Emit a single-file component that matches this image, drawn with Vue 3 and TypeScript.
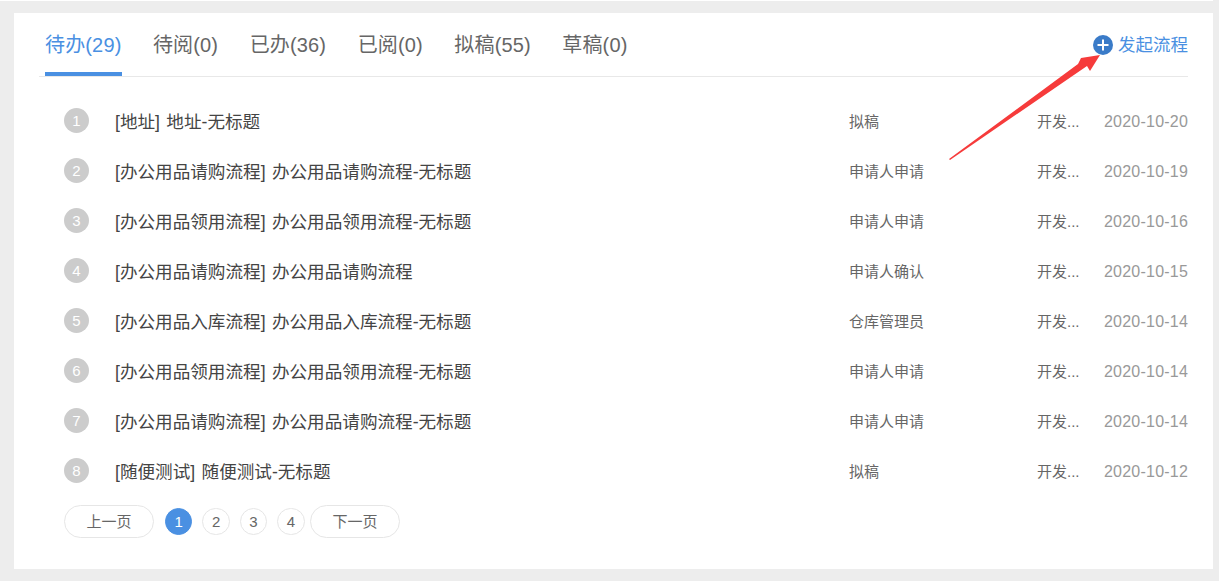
<script setup lang="ts">
const tabs = ['待办(29)', '待阅(0)', '已办(36)', '已阅(0)', '拟稿(55)', '草稿(0)']
const rows = [
  { title: '[地址] 地址-无标题', node: '拟稿', date: '2020-10-20' },
  { title: '[办公用品请购流程] 办公用品请购流程-无标题', node: '申请人申请', date: '2020-10-19' },
  { title: '[办公用品领用流程] 办公用品领用流程-无标题', node: '申请人申请', date: '2020-10-16' },
  { title: '[办公用品请购流程] 办公用品请购流程', node: '申请人确认', date: '2020-10-15' },
  { title: '[办公用品入库流程] 办公用品入库流程-无标题', node: '仓库管理员', date: '2020-10-14' },
  { title: '[办公用品领用流程] 办公用品领用流程-无标题', node: '申请人申请', date: '2020-10-14' },
  { title: '[办公用品请购流程] 办公用品请购流程-无标题', node: '申请人申请', date: '2020-10-14' },
  { title: '[随便测试] 随便测试-无标题', node: '拟稿', date: '2020-10-12' },
]
</script>

<template>
  <div class="page">
    <div class="topline"></div>
    <div class="card">
      <div class="tabbar">
        <div
          v-for="(t, i) in tabs"
          :key="t"
          class="tab"
          :class="{ active: i === 0 }"
        >{{ t }}</div>
        <div class="start">
          <svg class="plus" width="20" height="20" viewBox="0 0 20 20">
            <circle cx="10" cy="10" r="10" fill="#3a7bc8" />
            <path d="M10 4.5v11M4.5 10h11" stroke="#fff" stroke-width="2" />
          </svg>
          <span class="start-label">发起流程</span>
        </div>
      </div>
      <div class="list">
        <div v-for="(r, i) in rows" :key="i" class="row">
          <span class="num">{{ i + 1 }}</span>
          <span class="title">{{ r.title }}</span>
          <span class="node">{{ r.node }}</span>
          <span class="who">开发...</span>
          <span class="date">{{ r.date }}</span>
        </div>
      </div>
      <div class="pager">
        <span class="pg wide">上一页</span>
        <span class="pg cur">1</span>
        <span class="pg">2</span>
        <span class="pg">3</span>
        <span class="pg">4</span>
        <span class="pg wide next">下一页</span>
      </div>
      <svg class="arrow" width="160" height="112" viewBox="0 0 160 112">
        <path d="M1 107 L130 12 L133 6 L152 3 L142 19 L139 14 L2 108 Z" fill="#f63b3b" />
      </svg>
    </div>
  </div>
</template>

<style>
html, body { margin: 0; background: #ededed; }
</style>

<style scoped>
.page {
  box-sizing: border-box;
  width: 1219px;
  height: 581px;
  overflow: hidden;
  font-family: "Liberation Sans", "Noto Sans CJK SC", sans-serif;
}
.topline {
  width: 1213px;
  height: 1px;
  background: #fff;
}
.card {
  position: relative;
  box-sizing: border-box;
  width: 1199px;
  height: 556px;
  margin: 12px 0 0 14px;
  padding: 0 25px;
  background: #fff;
}
.tabbar {
  display: flex;
  box-sizing: border-box;
  height: 64px;
  padding-left: 6px;
  border-bottom: 1px solid #e8e8e8;
}
.tab {
  box-sizing: border-box;
  height: 63px;
  margin-right: 31px;
  padding-right: 0.5px;
  line-height: 64px;
  font-size: 20px;
  letter-spacing: 0.15px;
  color: #666;
}
.tab.active {
  color: #4a90e2;
  border-bottom: 4px solid #4a90e2;
}
.start {
  display: flex;
  align-items: center;
  gap: 5px;
  margin-left: auto;
  height: 63px;
  font-size: 17.5px;
  color: #4a90e2;
}
.start-label {
  margin-top: -2px;
}
.list {
  padding-top: 18px;
}
.row {
  display: flex;
  align-items: center;
  height: 50px;
}
.num {
  flex: none;
  width: 25px;
  height: 25px;
  margin-left: 25px;
  border-radius: 50%;
  background: #ccc;
  color: #fff;
  font-size: 15px;
  line-height: 25px;
  text-align: center;
}
.title {
  flex: none;
  width: 734px;
  margin-left: 26px;
  font-size: 17.6px;
  word-spacing: 1.5px;
  color: #444;
}
.node {
  flex: none;
  width: 188px;
  font-size: 15px;
  color: #666;
}
.who {
  flex: none;
  width: 67px;
  font-size: 15px;
  color: #666;
}
.date {
  flex: none;
  padding-top: 4px;
  white-space: nowrap;
  font-size: 16px;
  letter-spacing: 0.22px;
  color: #999;
}
.pager {
  display: flex;
  align-items: center;
  gap: 10px;
  margin: 10px 0 0 25px;
}
.pg {
  box-sizing: border-box;
  width: 27.4px;
  height: 27px;
  border: 1px solid #e6e6e6;
  border-radius: 14px;
  font-size: 15px;
  line-height: 25px;
  text-align: center;
  color: #666;
}
.pg.wide {
  width: 90px;
  height: 33px;
  border-radius: 17px;
  line-height: 31px;
}
.pg.next {
  margin-left: -5px;
  padding-left: 1px;
}
.pg.cur {
  margin-left: 1px;
  background: #4a90e2;
  border-color: #4a90e2;
  color: #fff;
}
.arrow {
  position: absolute;
  left: 934px;
  top: 39px;
}
</style>
